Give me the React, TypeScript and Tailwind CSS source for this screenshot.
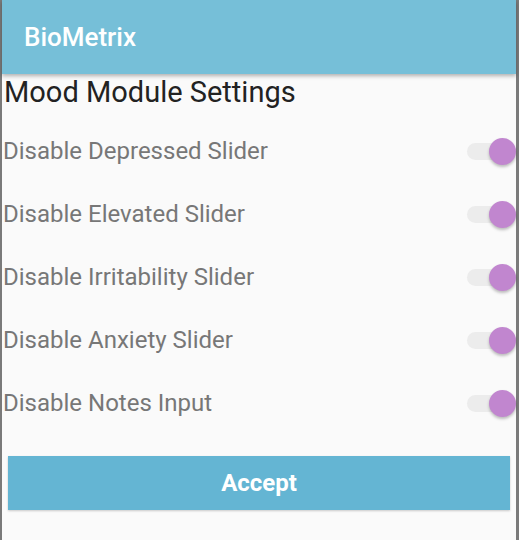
import React, { useState } from "react";

const items = [
  "Disable Depressed Slider",
  "Disable Elevated Slider",
  "Disable Irritability Slider",
  "Disable Anxiety Slider",
  "Disable Notes Input",
];

const Toggle = ({ on, onClick }: { on: boolean; onClick: () => void }) => (
  <button onClick={onClick} className="relative h-[27px] w-[49px] shrink-0">
    <span className="absolute left-0 right-[6px] top-[5px] h-[17px] rounded-full bg-[#ececec]" />
    <span
      className={
        on
          ? "absolute right-0 top-0 h-[27px] w-[27px] rounded-full bg-[#c186cf] shadow-[0_2px_3px_rgba(0,0,0,0.25)]"
          : "absolute left-0 top-0 h-[27px] w-[27px] rounded-full bg-[#c186cf] shadow-[0_2px_3px_rgba(0,0,0,0.25)]"
      }
    />
  </button>
);

export default function App() {
  const [toggles, setToggles] = useState([true, true, true, true, true]);

  return (
    <div className="flex h-[540px] w-[519px] bg-[#7a7a7a] font-['Roboto',sans-serif]">
      <div className="ml-[2px] mr-[3px] flex flex-1 flex-col bg-[#fafafa]">
        <div className="relative z-10 flex h-[74px] items-center bg-[#76bfd8] pl-[22px] shadow-[0_2px_4px_rgba(0,0,0,0.3)]">
          <span className="text-[26px] font-medium text-white">BioMetrix</span>
        </div>
        <h1 className="mt-[1px] pl-[2px] text-[29px] leading-[34px] text-[#222]">Mood Module Settings</h1>
        <div className="mt-[27px] flex flex-col">
          {items.map((label, i) => (
            <div key={label} className="h-[63px]">
              <div className="flex h-[30px] items-center justify-between">
                <span className="pl-[1px] text-[24px] leading-[30px] text-[#777]">{label}</span>
                <Toggle
                  on={toggles[i]}
                  onClick={() => setToggles(toggles.map((t, j) => (j === i ? !t : t)))}
                />
              </div>
            </div>
          ))}
        </div>
        <div className="px-[6px]">
          <button className="mt-[5px] h-[54px] w-full bg-[#64b5d3] text-[24px] font-bold text-white shadow-[0_1px_2px_rgba(0,0,0,0.2)]">
            Accept
          </button>
        </div>
      </div>
    </div>
  );
}
